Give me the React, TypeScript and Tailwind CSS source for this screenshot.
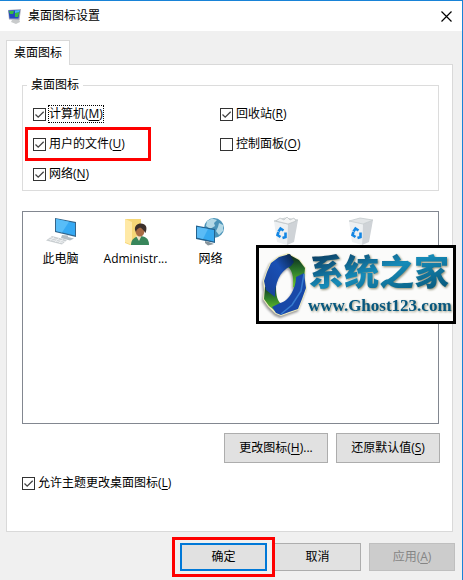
import type { ReactNode } from "react";

function Key({ children }: { children: string }) {
  return (
    <>
      (<span className="underline underline-offset-2">{children}</span>)
    </>
  );
}

function Check({ children, checked = false, focused = false }: { children: ReactNode; checked?: boolean; focused?: boolean }) {
  return (
    <label className="flex h-5 w-fit items-center gap-[3px]">
      <span className="grid size-[13px]">
        <input
          type="checkbox"
          defaultChecked={checked}
          className="peer col-start-1 row-start-1 size-[13px] appearance-none border border-[#333] bg-white"
        />
        <svg viewBox="0 0 13 13" className="pointer-events-none invisible col-start-1 row-start-1 size-[13px] peer-checked:visible">
          <path d="M2.5 6.5 5.2 9.2 10.7 3.7" fill="none" stroke="#444" strokeWidth="1.3" />
        </svg>
      </span>
      <span className={focused ? "outline outline-1 outline-dotted outline-black" : ""}>{children}</span>
    </label>
  );
}

function ComputerIcon() {
  return (
    <svg viewBox="0 0 32 30" className="h-[30px] w-8">
      <path d="M10 1 31 5V20L10 15Z" fill="#35658a" />
      <path d="M11 2 30 6V18.5L11 14Z" fill="#36a9f3" />
      <path d="M11 2 24 4.7 17 15.4 11 14Z" fill="#58bdf8" />
      <path d="M17 18 23 18.500V20L29 21.500 25 23.500 16 21Z" fill="#b4bec5" />
      <path d="M7 19 22 23 17 27.500 1 23.500Z" fill="#c9ced1" />
      <path d="M5 20.500 20 24.700M3.500 22 18 26M9 20 5 23.500M14 21.300 10 25M18 22.500 14 26" stroke="#f7f8f9" strokeWidth=".7" />
    </svg>
  );
}

function UserIcon() {
  return (
    <svg viewBox="0 0 32 30" className="h-[30px] w-8">
      <path d="M5 2H21V25L10 28 5 26Z" fill="#f6d777" />
      <path d="M5 2 12 5V28L5 25Z" fill="#ffe9a6" />
      <path d="M11 28C11 22 15 20 19 19 25 19 29 21 29 28Z" fill="#38865b" />
      <path d="M16 19 19 24 22 18Z" fill="#eee2c7" />
      <ellipse cx="20" cy="14" rx="4.500" ry="5.500" fill="#a96c45" />
      <path d="M15 13C14.500 9 17 6.500 21 6.500 25.500 6.500 28 10 25.500 16 24 14 22 11 20 10.500 18 12 17 11.500 16 15Z" fill="#3c302b" />
    </svg>
  );
}

function NetworkIcon() {
  return (
    <svg viewBox="0 0 32 30" className="h-[30px] w-8">
      <circle cx="19" cy="11" r="10" fill="#4a93b8" />
      <path d="M12 4 17 1.500 22 3 19 6 20 9 15 12 11 9ZM24 6 28 8 28 14 24 18 21 14 23 10Z" fill="#b4d9e6" />
      <path d="M1 8.500 20 12V26L1 22Z" fill="#24628e" />
      <path d="M2 10 19 13V24.500L2 20.500Z" fill="#37a9ef" />
      <path d="M2 10 13 12 8 22 2 20.500Z" fill="#5bbcf6" />
      <path d="M10 24V26L13 28.500 19 27 14 25Z" fill="#87949b" />
    </svg>
  );
}

function BinIcon({ full = false }: { full?: boolean }) {
  return (
    <svg viewBox="0 0 32 30" className="h-[30px] w-8">
      <path d="M4 4 18 7 17 28 7 25Z" fill="#edf0f2" />
      <path d="M18 7 28 3 24 25 17 28Z" fill="#cfd3d7" />
      <path d="M4 4 15 1 28 3 18 7Z" fill="#e2e5e7" stroke="#bfc5c9" strokeWidth=".7" />
      {full && <path d="M6 4 10 1 14 3 17 0 20 3 24 1 26 4 18 7Z" fill="#f3f4f4" stroke="#bcc1c4" strokeWidth=".7" />}
      <path d="M8.500 14.500 10.500 11.500 13.500 13.500M15.500 15.500 15.500 20 12.500 21M10.500 20 7.500 18 8.500 15" fill="none" stroke="#1386e4" strokeWidth="2.600" />
    </svg>
  );
}

function TitleIcon() {
  return (
    <svg viewBox="0 0 16 16" className="size-4">
      <path d="M5 12 12 11 13 14 9 16 4 14Z" fill="#c9cbcc" />
      <path d="M1 2 14 1 12.500 12 2 11.500Z" fill="#a7a9bd" />
      <path d="M1.500 2.500 13 2 11.500 10.500 2.500 10.500Z" fill="#2448c0" />
      <path d="M2 3 7 3 6 6 3 6ZM8 5 12.500 4 11 9 8 9Z" fill="#36bd42" />
      <path d="M8 2.500 13 2 12 4 8 5Z" fill="#47b9ee" />
    </svg>
  );
}

const items = [
  { name: "此电脑", icon: <ComputerIcon /> },
  { name: "Administr...", icon: <UserIcon /> },
  { name: "网络", icon: <NetworkIcon /> },
  { name: "", icon: <BinIcon full /> },
  { name: "", icon: <BinIcon /> },
];

function RingLogo() {
  return (
    <svg viewBox="0 0 46 64" className="h-16 w-[46px] shrink-0 drop-shadow-[-1px_2px_1px_#999]">
      <defs>
        <linearGradient id="ringBlue" x1="1" x2="0" y2="1">
          <stop stopColor="#06203c" />
          <stop offset=".4" stopColor="#1a50b4" />
          <stop offset="1" stopColor="#173f96" />
        </linearGradient>
        <linearGradient id="ringGreen" x2="0" y2="1">
          <stop stopColor="#08201c" />
          <stop offset=".5" stopColor="#2d7d2c" />
          <stop offset="1" stopColor="#76d326" />
        </linearGradient>
      </defs>
      <path
        d="M26 1 17 4 9 10 5 19 2 28 3 37 2 46 7 53 14 60 19 62 27 59 36 56 40 46 44 35 42 25 43 15 37 7Z"
        fill="none"
        stroke="#f0edc0"
        strokeWidth="2"
      />
      <path d="M26 1 37 7 43 15 42 28 36 36 31 34C32 24 30 17 26 14L20 12 22 5Z" fill="url(#ringGreen)" />
      <path d="M3 34 2 46 7 53 16 60 22 57 19 51C14 46 14 39 14 32L7 30Z" fill="url(#ringGreen)" />
      <path d="M28 1 17 4 9 10 5 19 2 28 4 37 13 44C13 31 17 18 29 13L32 9Z" fill="url(#ringBlue)" />
      <path d="M42 20 44 35 40 46 36 56 27 59 19 62 14 60 10 54 18 50C28 48 34 34 34 24Z" fill="#1848a8" />
      <path d="M42 21 39 38 30 52 19 61" fill="none" stroke="#377bd0" strokeWidth="1.500" />
    </svg>
  );
}

function Watermark() {
  return (
    <div className="absolute top-[33px] -right-[18px] flex h-[79px] w-[200px] items-center border-[3px] border-black bg-[#fbfbfa] pl-[3px]">
      <RingLogo />
      <div className="min-w-0 whitespace-nowrap">
        <div className="bg-linear-to-br from-[#082f52] via-[#168bb8] to-[#075375] bg-clip-text pl-px font-['Noto_Sans_CJK_SC',sans-serif] text-[35px] leading-[42px] font-black text-transparent drop-shadow-[1px_1px_1px_#8c8b70]">系统之家</div>
        <div className="font-['Liberation_Serif',serif] text-[17px] leading-[30px] font-bold text-[#07577f] drop-shadow-[1px_1px_1px_#9b9b80]">www.Ghost123.com</div>
      </div>
    </div>
  );
}

const button = "border border-[#adadad] bg-[#e1e1e1] text-center";

export default function App() {
  return (
    <main className="flex min-h-screen flex-col border-t border-r border-[#1883d7] bg-[#f0f0f0] font-['Open_Sans','Noto_Sans_CJK_SC',sans-serif] text-xs leading-4 text-black">
      <header className="flex h-[30px] items-center bg-white pr-2.5 pl-[7px]">
        <TitleIcon />
        <h1 className="ml-[5px] flex-1">桌面图标设置</h1>
        <button type="button" aria-label="关闭" className="size-[11px]">
          <svg viewBox="0 0 11 11" className="size-[11px]">
            <path d="M.5.5 10.500 10.500M10.500.5.5 10.500" stroke="black" strokeWidth="1.200" />
          </svg>
        </button>
      </header>

      <div className="flex flex-col pt-[9px] pr-[9px] pl-1.5">
        <div role="tablist" className="z-10 -mb-px flex">
          <button type="button" role="tab" aria-selected="true" className="h-[25px] w-16 border border-b-0 border-[#d9d9d9] bg-white">
            桌面图标
          </button>
        </div>
        <section role="tabpanel" className="border border-[#d9d9d9] bg-white pt-3 pr-[13px] pb-[38px] pl-[15px]">
          <fieldset className="h-[114px] border border-[#dcdcdc] px-2.5">
            <legend className="-ml-1.5 px-1">桌面图标</legend>
            <div className="grid grid-cols-[187px_1fr] gap-y-2.5 pt-[11px]">
              <Check checked focused>计算机<Key>M</Key></Check>
              <Check checked>回收站<Key>R</Key></Check>
              <div className="-my-[7px] mr-[69px] -ml-2 flex items-center border-[3px] border-[#fe0000] pl-[5px]">
                <Check checked>用户的文件<Key>U</Key></Check>
              </div>
              <Check>控制面板<Key>O</Key></Check>
              <Check checked>网络<Key>N</Key></Check>
            </div>
          </fieldset>

          <div className="relative mt-5 h-[213px] border border-[#828790] bg-white">
            <ul className="flex">
              {items.map((item, i) => (
                <li key={i} className="flex w-[75px] flex-col items-center pt-[5px]">
                  {item.icon}
                  <span className="mt-1">{item.name}</span>
                </li>
              ))}
            </ul>
            <Watermark />
          </div>

          <div className="mt-[9px] -mr-px flex justify-end gap-2">
            <button type="button" className={button + " h-[30px] w-[104px]"}>更改图标<Key>H</Key>...</button>
            <button type="button" className={button + " h-[30px] w-[104px]"}>还原默认值<Key>S</Key></button>
          </div>
          <div className="mt-2.5">
            <Check checked>允许主题更改桌面图标<Key>L</Key></Check>
          </div>
        </section>
      </div>

      <footer className="flex items-center justify-end pt-[5px] pr-[7px]">
        <div className="z-10 border-[3px] border-[#fe0000] px-[5px] py-[3px]">
          <button type="button" className="block h-[28px] w-[87px] border-2 border-[#0078d7] bg-[#e1e1e1]">确定</button>
        </div>
        <button type="button" className={button + " -ml-px h-[28px] w-[87px]"}>取消</button>
        <button type="button" disabled className="ml-2 h-[28px] w-[86px] border border-[#bfbfbf] bg-[#cccccc] text-[#858585]">
          应用<Key>A</Key>
        </button>
      </footer>
    </main>
  );
}
